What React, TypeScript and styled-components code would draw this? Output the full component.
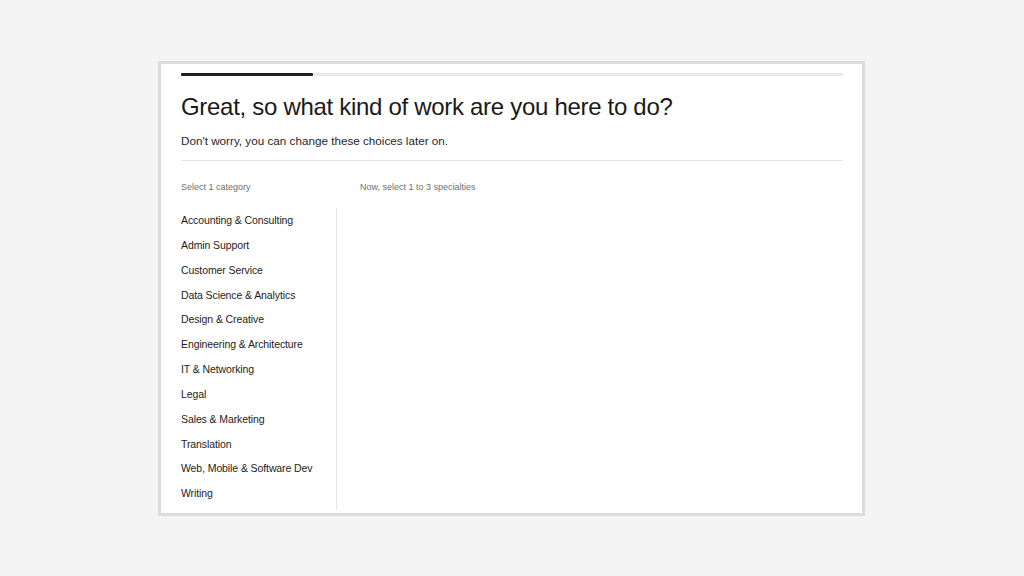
import React from "react";
import styled, { createGlobalStyle } from "styled-components";

const Global = createGlobalStyle`
  html, body { margin: 0; padding: 0; background: #f4f4f4; }
  body { font-family: "Liberation Sans", Arial, sans-serif; }
  * { box-sizing: border-box; }
`;

const Page = styled.div`
  width: 1024px;
  height: 576px;
  padding: 61px 0 0 158px;
  background: #f4f4f4;
`;

const Card = styled.section`
  width: 707px;
  height: 455px;
  background: #ffffff;
  border: 3px solid #dcdcdc;
  padding: 9px 19px 0 20px;
  display: flex;
  flex-direction: column;
`;

const Track = styled.div`
  height: 3px;
  background: #e9e9e9;
  display: flex;
`;

const Fill = styled.div`
  height: 3px;
  background: #1f1f1f;
  border-radius: 1px;
`;

const Title = styled.h1`
  margin: 16px 0 0;
  font-size: 24px;
  line-height: 30px;
  font-weight: 400;
  color: #1a1a1a;
  letter-spacing: -0.3px;
`;

const Subtitle = styled.p`
  margin: 11px 0 0;
  font-size: 11.7px;
  line-height: 16px;
  color: #1f1f1f;
  padding-bottom: 11px;
  border-bottom: 1px solid #e4e4e4;
`;

const Columns = styled.div`
  display: grid;
  grid-template-columns: 156px 1fr;
  grid-template-rows: auto 1fr;
  flex: 1;
  min-height: 0;
`;

const Label = styled.div<{ $inset?: boolean }>`
  font-size: 9px;
  line-height: 12px;
  color: #6f6f6f;
  padding: 20px 0 12px ${(p) => (p.$inset ? "23px" : "0")};
`;

const CategoryList = styled.ul`
  list-style: none;
  margin: 3px 0 3px;
  padding: 0;
  border-right: 1px solid #e6e6e6;
`;

const Category = styled.li`
  font-size: 10.5px;
  line-height: 24.85px;
  color: #1c1c1c;
  white-space: nowrap;
  letter-spacing: -0.1px;
`;

const Specialties = styled.div``;

const categories = [
  "Accounting & Consulting",
  "Admin Support",
  "Customer Service",
  "Data Science & Analytics",
  "Design & Creative",
  "Engineering & Architecture",
  "IT & Networking",
  "Legal",
  "Sales & Marketing",
  "Translation",
  "Web, Mobile & Software Dev",
  "Writing",
];

export default function App() {
  return (
    <>
      <Global />
      <Page>
        <Card>
          <Track>
            <Fill style={{ width: "20%" }} />
          </Track>
          <Title>Great, so what kind of work are you here to do?</Title>
          <Subtitle>Don't worry, you can change these choices later on.</Subtitle>
          <Columns>
            <Label>Select 1 category</Label>
            <Label $inset>Now, select 1 to 3 specialties</Label>
            <CategoryList>
              {categories.map((c) => (
                <Category key={c}>{c}</Category>
              ))}
            </CategoryList>
            <Specialties />
          </Columns>
        </Card>
      </Page>
    </>
  );
}
